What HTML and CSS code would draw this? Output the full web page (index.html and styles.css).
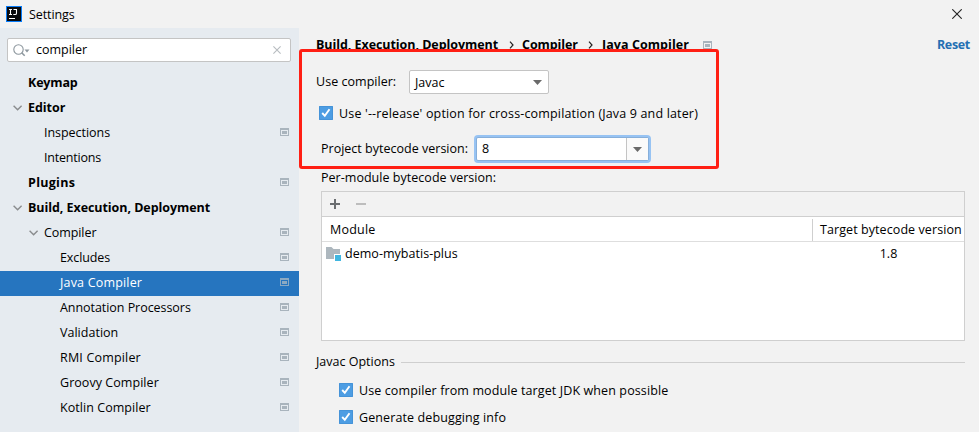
FILE: index.html
```html
<!DOCTYPE html>
<html lang="en">
<head>
<meta charset="utf-8">
<title>Settings</title>
<link rel="stylesheet" href="styles.css">
</head>
<body>
<svg class="defs" width="0" height="0" aria-hidden="true">
  <symbol id="project" viewBox="0 0 9 8"><path fill="currentColor" fill-rule="evenodd" d="M0 0h9v8H0zM1 2v5h7V2zM2 3h5v3H2z"/></symbol>
  <symbol id="chevron" viewBox="0 0 10 6"><path fill="none" stroke="#8a8c8e" stroke-width="1.4" d="M.6 .8l4 4 4-4"/></symbol>
  <symbol id="check" viewBox="0 0 14 14"><rect width="14" height="14" rx="1" fill="#4d9de3"/><path d="M.5.5h13v13H.5z" fill="none" stroke="#4593d8"/><path fill="none" stroke="#fff" stroke-width="1.9" d="M3.2 7l2.6 2.8 4.7-6.6"/></symbol>
  <symbol id="arrow" viewBox="0 0 9 5"><path fill="#6a6a6a" d="M0 0h9L4.500 5z"/></symbol>
</svg>
<div class="window">
  <header class="titlebar">
    <svg class="logo" width="16" height="16" viewBox="0 0 16 16"><rect width="16" height="16" fill="#087cfa"/><rect x="1" y="1" width="14" height="14" fill="#080a0d"/><path fill="none" stroke="#fff" stroke-width="1.1" d="M3 3.500h3M4.500 3.500v5M3 8.500h3M7.500 3.500h3v3.700q0 1.300-1.300 1.300H7.300"/><path fill="#fff" d="M3 12h6v1H3z"/></svg>
    <span class="title">Settings</span>
    <svg class="close" width="10" height="10" viewBox="0 0 10 10"><path stroke="#222" stroke-width="1.1" d="M.3.3l9.400 9.400M9.700.3L.3 9.700"/></svg>
  </header>
  <div class="content">
    <aside class="sidebar">
      <div class="search">
        <svg width="17" height="13" viewBox="0 0 17 13"><circle cx="5.500" cy="5.500" r="4.700" fill="none" stroke="#8d979e" stroke-width="1.100"/><path stroke="#8d979e" stroke-width="1.600" d="M8.700 8.700l3 3"/><path fill="#8d979e" d="M11.500 5.500h5L14 8.500z"/></svg>
        <span class="query">compiler</span>
        <svg class="clear" width="8" height="8" viewBox="0 0 8 8"><path stroke="#b7bcc0" stroke-width="1.100" d="M.4.4l7.200 7.200M7.600.4L.4 7.600"/></svg>
      </div>
      <nav class="tree">
        <div class="row top"><span class="t-keymap">Keymap</span></div>
        <div class="row top"><svg class="chev"><use href="#chevron"/></svg><span class="t-editor">Editor</span></div>
        <div class="row mid"><span class="t-insp">Inspections</span><svg class="proj"><use href="#project"/></svg></div>
        <div class="row mid"><span class="t-int">Intentions</span></div>
        <div class="row top"><span class="t-plugins">Plugins</span><svg class="proj"><use href="#project"/></svg></div>
        <div class="row top"><svg class="chev"><use href="#chevron"/></svg><span class="t-build">Build, Execution, Deployment</span></div>
        <div class="row mid"><svg class="chev"><use href="#chevron"/></svg><span class="t-comp">Compiler</span><svg class="proj"><use href="#project"/></svg></div>
        <div class="row leaf"><span class="t-excl">Excludes</span><svg class="proj"><use href="#project"/></svg></div>
        <div class="row leaf selected"><span class="t-java">Java Compiler</span><svg class="proj"><use href="#project"/></svg></div>
        <div class="row leaf"><span class="t-annot">Annotation Processors</span><svg class="proj"><use href="#project"/></svg></div>
        <div class="row leaf"><span class="t-valid">Validation</span><svg class="proj"><use href="#project"/></svg></div>
        <div class="row leaf"><span class="t-rmi">RMI Compiler</span><svg class="proj"><use href="#project"/></svg></div>
        <div class="row leaf"><span class="t-lang">Groovy Compiler</span><svg class="proj"><use href="#project"/></svg></div>
        <div class="row leaf"><span class="t-lang">Kotlin Compiler</span><svg class="proj"><use href="#project"/></svg></div>
      </nav>
    </aside>
    <main class="main">
      <div class="crumbs">
        <span class="crumb-build t-build">Build, Execution, Deployment</span>
        <svg class="sep" width="5" height="8" viewBox="0 0 5 8"><path fill="none" stroke="#222" stroke-width="1.200" d="M1 .7L4 4 1 7.300"/></svg>
        <span class="crumb-comp t-bcomp">Compiler</span>
        <svg class="sep" width="5" height="8" viewBox="0 0 5 8"><path fill="none" stroke="#222" stroke-width="1.200" d="M1 .7L4 4 1 7.300"/></svg>
        <span class="crumb-java t-bjava">Java Compiler</span>
        <svg class="proj"><use href="#project"/></svg>
        <span class="reset">Reset</span>
      </div>
      <div class="field compiler-field">
        <label class="t-use">Use compiler:</label>
        <div class="combo"><span>Javac</span><svg class="arrow"><use href="#arrow"/></svg></div>
      </div>
      <div class="option release"><svg class="check"><use href="#check"/></svg><span class="t-release">Use '--release' option for cross-compilation (Java 9 and later)</span></div>
      <div class="field version-field">
        <label class="t-project">Project bytecode version:</label>
        <div class="version"><span class="value">8</span><span class="drop"><svg class="arrow"><use href="#arrow"/></svg></span></div>
      </div>
      <div class="module-label t-per">Per-module bytecode version:</div>
      <section class="table">
        <div class="tools">
          <svg width="10" height="10" viewBox="0 0 10 10"><path fill="#6a6d70" d="M4 0h2v4h4v2H6v4H4V6H0V4h4z"/></svg>
          <svg width="10" height="10" viewBox="0 0 10 10"><path fill="#bdbdbd" d="M0 4h10v2H0z"/></svg>
        </div>
        <div class="cols head"><span class="t-module">Module</span><span class="target t-target">Target bytecode version</span></div>
        <div class="cols item">
          <span class="module"><svg width="16" height="14" viewBox="0 0 16 14"><path fill="#adb7be" d="M0 0h5.500L7.500 2H14v5H8v5H0z"/><path fill="#40b6e0" d="M9 8h6v6H9z"/></svg><span class="t-demo">demo-mybatis-plus</span></span>
          <span class="num">1.8</span>
        </div>
      </section>
      <div class="group"><span>Javac Options</span><i class="rule"></i></div>
      <div class="option sub"><svg class="check"><use href="#check"/></svg><span class="t-jdk">Use compiler from module target JDK when possible</span></div>
      <div class="option sub"><svg class="check"><use href="#check"/></svg><span class="t-debug">Generate debugging info</span></div>
    </main>
  </div>
  <div class="highlight"></div>
</div>
</body>
</html>
```
FILE: styles.css
```css
* { box-sizing: border-box; }
body { margin: 0; background: #f2f2f2; color: #000; font: 12.5px/20px "Open Sans", "Noto Sans", sans-serif; white-space: nowrap; }
svg { display: block; flex: none; }
.defs { position: absolute; }
.window { position: relative; width: 979px; height: 432px; overflow: hidden; display: flex; flex-direction: column; }
.titlebar { height: 28px; flex: none; display: flex; align-items: center; padding: 0 17px 0 6px; }
.title { margin-left: 7px; padding-top: 2px; letter-spacing: -.1px; }
.close { margin-left: auto; }
.content { flex: 1; min-height: 0; display: flex; }
.sidebar { width: 299px; flex: none; background: #e6ebf0; padding-top: 10px; }
.search { height: 24px; width: 284px; margin-left: 7px; display: flex; align-items: center; padding: 0 9px 0 5px; background: #fff; border: 1px solid #c4c4c4; border-radius: 2px; }
.query { margin-left: 6px; letter-spacing: -.02px; }
.clear { margin-left: auto; }
.tree { margin-top: 9px; }
.row { height: 25px; display: flex; align-items: center; padding-right: 10px; }
.row > span { position: relative; top: -.5px; }
.top { padding-left: 28px; font-weight: bold; }
.mid { padding-left: 44px; }
.leaf { padding-left: 60px; }
.selected { background: #2675bf; color: #fff; }
.chev { width: 10px; height: 6px; margin: 0 5px 1px -15px; }
.proj { width: 9px; height: 8px; color: #a9b4bd; }
.row .proj { margin: 0 0 3px auto; }
.selected .proj { color: #8ba9c2; }
.main { flex: 1; min-width: 0; padding: 7px 14px 0 17px; }
.crumbs { height: 20px; display: flex; align-items: center; font-weight: bold; }
.crumb-build { width: 193px; }
.crumb-comp { width: 62px; margin-left: 8px; }
.crumb-java { width: 92px; margin-left: 9px; }
.crumbs .proj { margin-left: 9px; }
.crumb-comp + .sep { margin-left: 4px; }
.reset { margin-left: auto; width: 28px; color: #2470b3; letter-spacing: -.38px; }
.field { display: flex; align-items: center; }
.compiler-field { height: 24px; margin-top: 15px; }
.compiler-field label { width: 93px; }
.combo { width: 140px; height: 24px; display: flex; align-items: center; justify-content: space-between; padding: 2px 6px 0 5px; background: #fff; border: 1px solid #c4c4c4; border-radius: 2px; }
.arrow { width: 9px; height: 5px; }
.combo .arrow { margin-bottom: 2px; }
.option { display: flex; align-items: center; gap: 6px; height: 20px; }
.option > span { padding-top: 2px; }
.check { width: 14px; height: 14px; }
.release { margin: 9px 0 0 3px; }
.version-field { height: 24px; margin: 14px 0 0 5px; }
.version-field label { width: 155px; }
.version { width: 173px; height: 24px; display: flex; background: #fff; border: 1px solid #87afda; border-radius: 2px; box-shadow: 0 0 0 2px #97c3f3; }
.value { flex: 1; padding-left: 5px; line-height: 22px; }
.drop { width: 22px; display: flex; align-items: center; justify-content: center; border-left: 1px solid #c4c4c4; background: #fafafa; }
.module-label { height: 20px; margin: 7px 0 0 5px; }
.table { height: 150px; margin: 3px 0 0 5px; border: 1px solid #cfcfcf; background: #fff; }
.tools { height: 25px; padding-left: 8px; display: flex; align-items: center; gap: 16px; border-bottom: 1px solid #cfcfcf; background: #f2f2f2; }
.cols { height: 25px; display: grid; grid-template-columns: 490px 1fr; align-items: center; }
.head { border-bottom: 1px solid #dedede; padding-top: 1px; }
.t-module { padding-left: 8px; padding-top: 1px; }
.target { height: 22px; line-height: 22px; padding-left: 7px; border-left: 1px solid #cfcfcf; }
.item { padding-bottom: 2px; }
.module { display: flex; align-items: center; gap: 3px; padding-left: 4px; }
.num { text-align: center; padding-left: 1px; }
.group { height: 20px; margin-top: 11px; display: flex; align-items: center; gap: 6px; }
.rule { flex: 1; height: 1px; background: #cfcfcf; }
.sub { margin: 8px 0 0 23px; }
.sub + .sub { margin-top: 7px; }
.highlight { position: absolute; left: 299px; top: 49px; width: 420px; height: 120px; border: 3px solid #ff1f14; border-radius: 3px; }

/* Per-label tracking */
.t-keymap { letter-spacing: -.17px; }
.t-editor { letter-spacing: -.05px; }
.t-insp { letter-spacing: -.04px; }
.t-int { letter-spacing: -.21px; }
.t-plugins { letter-spacing: .29px; }
.t-build { letter-spacing: -.06px; }
.t-comp { letter-spacing: -.08px; }
.t-bcomp { letter-spacing: -.09px; }
.t-bjava { letter-spacing: .06px; }
.t-excl { letter-spacing: -.11px; }
.t-java { letter-spacing: .18px; }
.t-annot { letter-spacing: -.05px; }
.t-valid { letter-spacing: .02px; }
.t-rmi { letter-spacing: .18px; }
.t-lang { letter-spacing: .05px; }
.t-use { letter-spacing: .03px; }
.t-release { letter-spacing: .16px; }
.t-project { letter-spacing: .01px; }
.t-per { letter-spacing: .03px; }
.t-module { letter-spacing: .2px; }
.t-target { letter-spacing: .08px; }
.t-demo { letter-spacing: .03px; }
.t-jdk { letter-spacing: .11px; }
.t-debug { letter-spacing: .11px; }
```
